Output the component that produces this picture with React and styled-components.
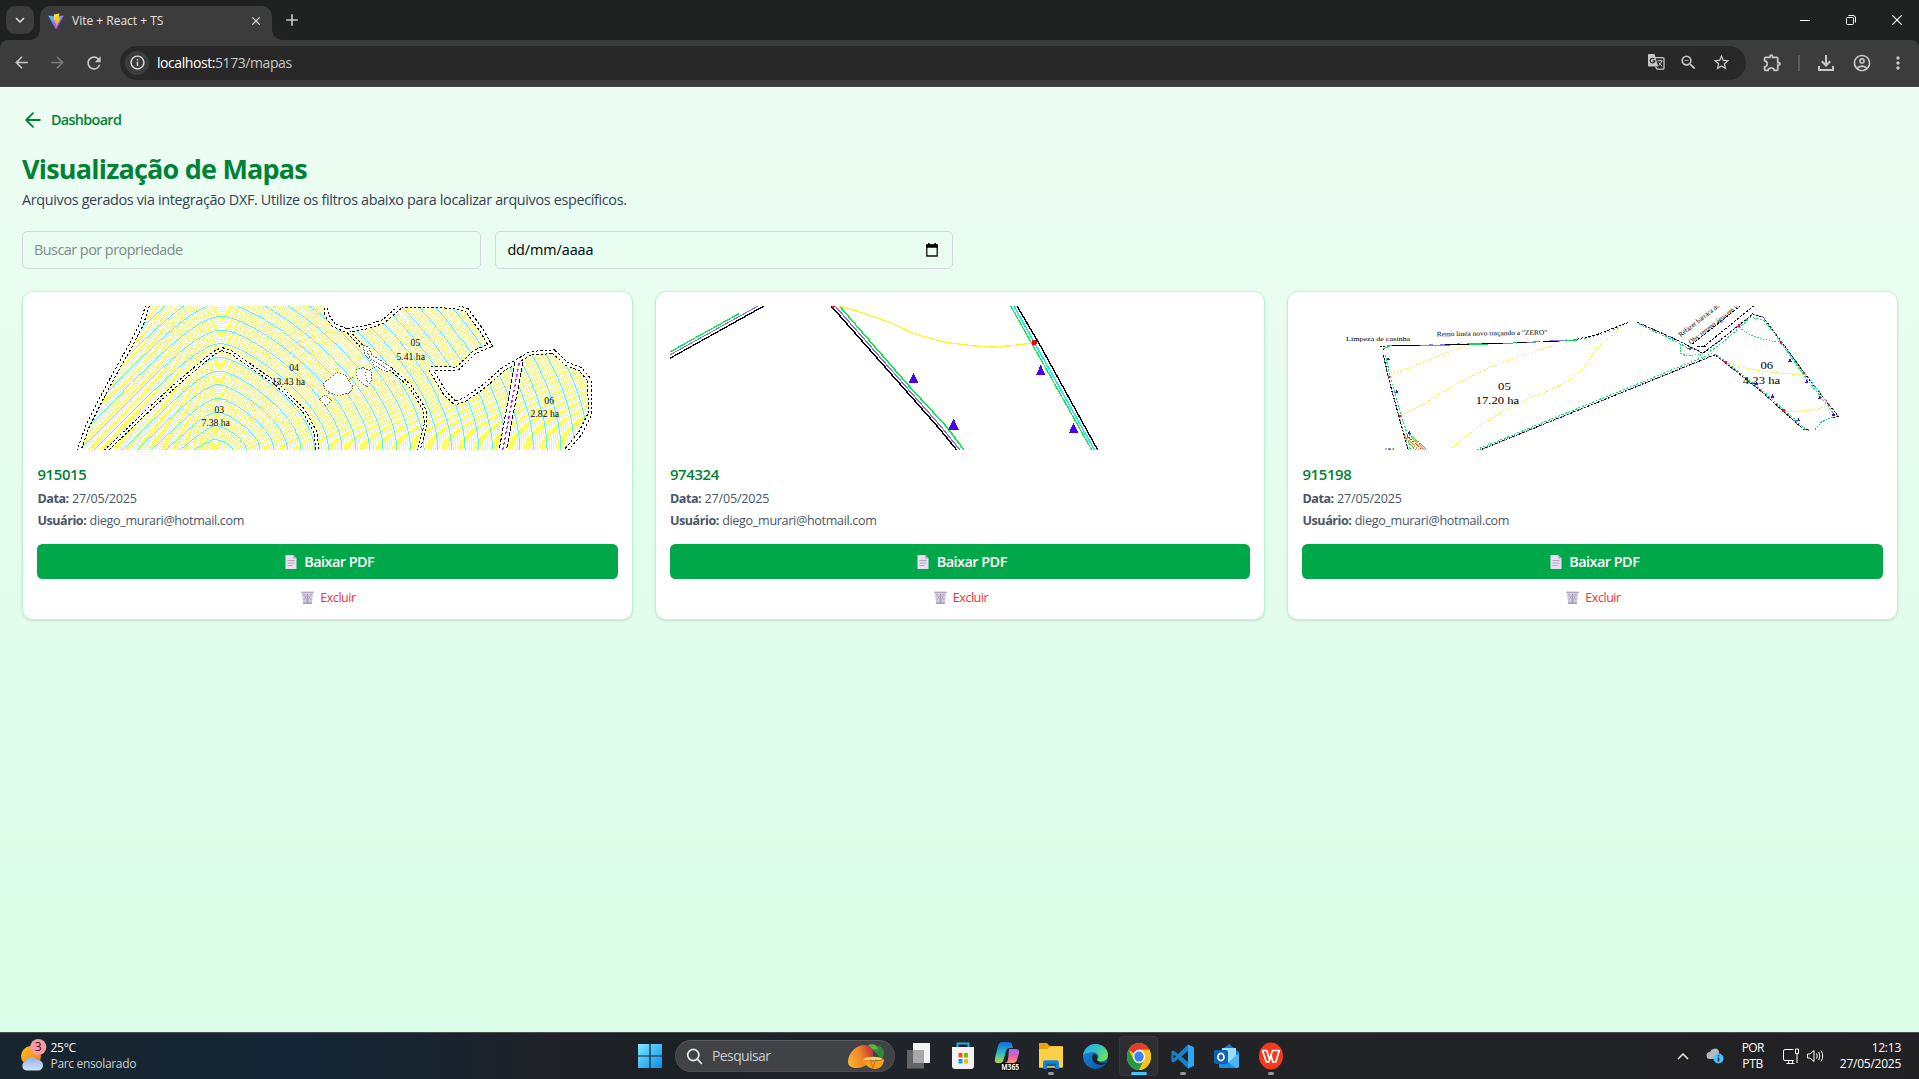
import React from "react";
import styled, { createGlobalStyle, css } from "styled-components";
import {
  MdArrowBack, MdArrowForward, MdRefresh, MdInfoOutline, MdStarOutline, MdZoomOut,
  MdOutlineExtension, MdOutlineAccountCircle, MdMoreVert,
  MdClose, MdAdd, MdKeyboardArrowDown,
} from "react-icons/md";

const Global = createGlobalStyle`
  *, *::before, *::after { box-sizing: border-box; }
  html, body { margin: 0; padding: 0; overflow: hidden; }
  body { font-family: "Open Sans", "Noto Sans", sans-serif; }
  h1, h2, p { margin: 0; }
  button, input { font-family: inherit; }
  svg { display: block; flex: none; }
`;

const Screen = styled.div`
  width: 1919px;
  height: 1079px;
  display: flex;
  flex-direction: column;
  overflow: hidden;
`;

/* ---------- browser ---------- */

const TabStrip = styled.div`
  height: 40px;
  flex: none;
  display: flex;
  align-items: flex-start;
  justify-content: space-between;
  background: #202221;
  padding: 6px 0 0 6px;
`;

const TabGroup = styled.div`
  display: flex;
  align-items: flex-start;
`;

const TabSearch = styled.div`
  width: 28px;
  height: 28px;
  border-radius: 9px;
  background: #3c3c3c;
  color: #e3e3e3;
  display: grid;
  place-items: center;
`;

const Tab = styled.div`
  position: relative;
  width: 232px;
  height: 34px;
  margin-left: 6px;
  padding: 0 9px 4px 8px;
  border-radius: 10px 10px 0 0;
  background: #3c3c3c;
  color: #e3e3e3;
  display: flex;
  align-items: center;

  &::before, &::after {
    content: "";
    position: absolute;
    bottom: 0;
    width: 10px;
    height: 10px;
  }
  &::before {
    left: -10px;
    background: radial-gradient(circle at 0 0, transparent 9.5px, #3c3c3c 10px);
  }
  &::after {
    right: -10px;
    background: radial-gradient(circle at 100% 0, transparent 9.5px, #3c3c3c 10px);
  }
`;

const TabTitle = styled.span`
  flex: 1;
  margin-left: 8px;
  font-size: 12px;
  line-height: 16px;
`;

const NewTab = styled.div`
  margin: 4px 0 0 10px;
  color: #c7c7c7;
`;

const WindowControls = styled.div`
  display: flex;
  margin: -6px -1px 0 0;
`;

const WindowControl = styled.div`
  width: 46px;
  height: 40px;
  display: grid;
  place-items: center;
`;

const Toolbar = styled.div`
  height: 47px;
  flex: none;
  display: flex;
  align-items: center;
  padding: 0 11px 1px 12px;
  background: #3c3c3c;
  border-bottom: 1px solid #4a4a4a;
  border-radius: 8px 8px 0 0;
`;

const ToolbarBack = styled.div`
  flex: none;
  background: #202221;
`;

const NavIcon = styled.div`
  width: 36px;
  color: ${(p) => (p.$dim ? "#7c7c7c" : "#c7c7c7")};
`;

const Omnibox = styled.div`
  flex: 1;
  height: 34px;
  border-radius: 17px;
  background: #282828;
  display: flex;
  align-items: center;
  padding: 0 15px 0 5px;
  color: #c7c7c7;
`;

const SiteInfo = styled.div`
  width: 24px;
  height: 24px;
  border-radius: 50%;
  background: #3c3c3c;
  color: #e3e3e3;
  display: grid;
  place-items: center;
`;

const Url = styled.span`
  flex: 1;
  margin-left: 8px;
  font-size: 14px;
  line-height: 20px;
  letter-spacing: -0.43px;
  color: #c7c7c7;
`;

const Host = styled.span`
  color: #fff;
`;

const OmniActions = styled.div`
  display: flex;
  gap: 14px;
`;

const ToolbarActions = styled.div`
  display: flex;
  align-items: center;
  color: #c7c7c7;
  margin-left: 16px;
`;

const Divider = styled.div`
  width: 2px;
  height: 16px;
  background: #5c5c5c;
  margin: 0 18px 0 15px;
`;

const ToolSlot = styled.div`
  margin-left: ${(p) => p.$gap}px;
`;

/* ---------- page ---------- */

const Page = styled.main`
  flex: 1;
  min-height: 0;
  padding: 21.6px 21px 21.6px 22px;
  background: linear-gradient(180deg, #eefdf4, #d9fde7);
  display: flex;
  flex-direction: column;
`;

const BackLink = styled.a`
  display: flex;
  align-items: center;
  align-self: flex-start;
  gap: 7px;
  height: 22px;
  color: #008236;
  font-size: 14.4px;
  font-weight: 600;
  letter-spacing: -0.68px;
`;

const Title = styled.h1`
  margin-top: 22px;
  font-size: 27px;
  line-height: 32.4px;
  font-weight: 700;
  letter-spacing: -0.8px;
  color: #008236;
  white-space: nowrap;
`;

const Subtitle = styled.p`
  margin-top: 3.6px;
  font-size: 14.4px;
  line-height: 21.6px;
  letter-spacing: -0.34px;
  color: #364153;
`;

const Filters = styled.div`
  display: flex;
  gap: 14.4px;
  margin-top: 20.4px;
`;

const field = css`
  width: 458.5px;
  height: 38px;
  border: 1px solid #d1d5dc;
  border-radius: 5.4px;
  padding: 0 11px;
  font-size: 14.4px;
  background: transparent;
`;

const SearchField = styled.input`
  ${field}
  letter-spacing: -0.52px;
  outline: none;
  &::placeholder { color: #7e8b86; opacity: 1; }
`;

const DateField = styled.div`
  ${field}
  display: flex;
  align-items: center;
  justify-content: space-between;
  padding: 0 14px 0 11.5px;
  color: #000;
`;

const DateText = styled.span`
  letter-spacing: -0.08px;
`;

const Cards = styled.div`
  display: grid;
  grid-template-columns: repeat(3, 1fr);
  gap: 21.6px;
  margin-top: 22px;
`;

const Card = styled.article`
  height: 329.5px;
  padding: 14.4px 14.4px 8px;
  background: #fff;
  border: 1px solid #b9f8cf;
  border-radius: 10.8px;
  box-shadow: 0 1px 3px rgba(0, 0, 0, 0.1), 0 1px 2px -1px rgba(0, 0, 0, 0.1);
  display: flex;
  flex-direction: column;
`;

const Preview = styled.svg`
  width: 100%;
  height: 144px;
  overflow: hidden;
  font-family: "Liberation Serif", serif;
`;

const CardName = styled.h2`
  margin-top: 12px;
  font-size: 14.9px;
  line-height: 25.2px;
  font-weight: 600;
  letter-spacing: -0.35px;
  color: #008236;
`;

const Meta = styled.p`
  margin-top: 3.3px;
  font-size: 12.6px;
  line-height: 18px;
  color: #4a5565;
`;

const MetaKey = styled.strong`
  letter-spacing: -0.46px;
`;

const MetaValue = styled.span`
  letter-spacing: ${(p) => p.$ls || -0.2}px;
`;

const DownloadButton = styled.button`
  margin-top: 14.4px;
  height: 35px;
  border: 0;
  border-radius: 5.4px;
  background: #00a849;
  color: #fff;
  font-size: 14.4px;
  font-weight: 600;
  padding: 0 0 0 4px;
  display: flex;
  align-items: center;
  justify-content: center;
  gap: 7.5px;
`;

const DeleteButton = styled.button`
  margin-top: 8.2px;
  height: 20px;
  border: 0;
  background: none;
  color: #fb2c36;
  font-size: 12.6px;
  padding: 0 0 0 2px;
  display: flex;
  align-items: center;
  justify-content: center;
  gap: 6px;
`;

const ButtonText = styled.span`
  letter-spacing: ${(p) => p.$ls || 0}px;
`;

/* ---------- taskbar ---------- */

const Taskbar = styled.footer`
  height: 47px;
  flex: none;
  display: grid;
  grid-template-columns: 638px 1fr 262px;
  align-items: center;
  border-top: 1px solid #46504f;
  background: linear-gradient(90deg, #18252e 0, #162636 300px, #18232d 440px, #202126 560px, #1c2127 660px, #20242a 900px, #222326 1300px, #212123 100%);
  color: #fff;
  font-size: 12px;
  line-height: 16px;
`;

const Weather = styled.div`
  display: flex;
  align-items: center;
  padding-left: 20px;
  gap: 3.5px;
`;

const WeatherText = styled.div`
  display: flex;
  flex-direction: column;
`;

const Muted = styled.span`
  color: #c9cdd0;
  letter-spacing: -0.33px;
`;

const Tight = styled.span`
  letter-spacing: ${(p) => p.$ls || -0.25}px;
`;

const Apps = styled.div`
  display: flex;
  align-items: center;
`;

const SearchBox = styled.div`
  width: 220px;
  height: 32px;
  margin: 0 2px 0 13px;
  border-radius: 16px;
  background: #404246;
  border: 1px solid #4c4e52;
  border-top-color: #5a5c60;
  display: flex;
  align-items: center;
  padding: 0 9px 0 10px;
  color: #c9c9cb;
`;

const SearchText = styled.span`
  flex: 1;
  margin-left: 9px;
  font-size: 14px;
  letter-spacing: -0.6px;
`;

const AppSlot = styled.div`
  position: relative;
  width: 44px;
  height: 40px;
  display: grid;
  place-items: center;
`;

const ActivePlate = styled.div`
  position: absolute;
  left: 2px;
  top: 0;
  width: 39px;
  height: 40px;
  border-radius: 4px;
  background: #2c2e32;
  border: 1px solid #37393d;
`;

const RunDot = styled.div`
  position: absolute;
  bottom: 1px;
  left: 50%;
  width: ${(p) => (p.$active ? 16 : 6)}px;
  height: 3px;
  margin-left: ${(p) => (p.$active ? -8 : -3)}px;
  border-radius: 2px;
  background: ${(p) => (p.$active ? "#4cc2ff" : "#9a9a9c")};
`;

const AppIcon = styled.svg`
  position: relative;
`;

const Tray = styled.div`
  display: flex;
  align-items: center;
  justify-content: flex-end;
  padding-right: 18px;
`;

const TrayIcons = styled.div`
  display: flex;
  align-items: center;
  gap: ${(p) => p.$gap}px;
`;

const Stack = styled.div`
  display: flex;
  flex-direction: column;
  align-items: ${(p) => p.$align || "center"};
  margin: ${(p) => p.$margin || 0};
`;

/* ---------- map drawings ---------- */

const REGION =
  "M236,-10 L232,18 L215,72 L180,140 L132,225 L92,300 L52,380 L24,460 L1480,460 L1530,400 L1560,340 L1558,240 L1530,207 L1490,192 L1450,155 L1380,160 L1335,187 L1300,207 L1240,260 L1185,298 L1155,309 L1125,280 L1080,205 L1110,205 L1160,207 L1215,155 L1260,136 L1235,92 L1190,30 L1160,22 L1100,16 L995,16 L940,64 L895,80 L830,92 L790,75 L770,45 L763,-10 Z";

function contour(n) {
  const apex = 418 - 41 * n;
  const h = 450 - apex;
  const left = 372 - 43 * n;
  const right = 488 + 41 * n;
  const tip = 435 + Math.min(n, 8) * 2.5;
  const wl = tip - left;
  const wr = right - tip;
  return `M${left},460 L${left},450 C${left + wl * 0.45},${450 - h * 0.52} ${tip - wl * 0.2},${apex} ${tip},${apex} C${tip + wr * 0.22},${apex} ${right},${450 - h * 0.45} ${right},450 L${right},460`;
}

function Road({ d, w = 15 }) {
  return (
    <g fill="none">
      <path d={d} stroke="#000" strokeWidth={w} strokeDasharray="7 6" />
      <path d={d} stroke="#fff" strokeWidth={w - 6} />
    </g>
  );
}

function ContourMap() {
  const yellow = [];
  const cyan = [];
  for (let i = -4; i < 180; i += 1) {
    if (i % 6 === 0) cyan.push(contour(i / 6));
    else yellow.push(contour(i / 6));
  }
  return (
    <Preview viewBox="-99 18 1740 432" preserveAspectRatio="none" shapeRendering="crispEdges">
      <clipPath id="region"><path d={REGION} /></clipPath>
      <g clipPath="url(#region)" fill="none">
        <path d={REGION} fill="#fff" />
        <path d={yellow.join(" ")} stroke="#fbf93a" strokeWidth="2.6" />
        <path d={cyan.join(" ")} stroke="#19f5f0" strokeWidth="2.4" />
      </g>
      <Road d={REGION} w={14} />
      <Road d="M105,455 L240,325 L340,235 L430,160 L455,147 L480,155 L620,252 L700,330 L738,400 L741,455" w={12} />
      <Road d="M835,95 L880,145" w={12} />
      <Road d="M960,205 L1020,258 L1064,330 L1067,372 L1045,455" w={11} />
      <g fill="#fff" stroke="#444" strokeWidth="2.6" strokeDasharray="5 4">
        <path d="M880,136 L895,141 L905,165 L940,186 L968,208 L950,216 L915,197 L884,165 Z" />
        <path d="M890,152 L900,175 L950,206" />
        <path d="M800,218 L825,225 L850,262 L840,278 L800,287 L765,270 L760,250 Z" />
        <path d="M880,203 L905,215 L905,240 L892,262 L860,235 L858,210 Z" />
        <path d="M885,215 L892,250" />
        <path d="M762,285 L785,300 L768,318 L748,300 Z" />
        <path d="M838,238 L856,228 M898,212 L915,200 M768,288 L780,275" />
      </g>
      <path d="M1347,185 L1297,455" stroke="#fff" strokeWidth="24" />
      <path d="M1335,185 L1286,455 M1359,185 L1308,455" stroke="#000" strokeWidth="3" strokeDasharray="12 6" />
      <path d="M1347,190 L1297,455" stroke="#f0f" strokeWidth="3.6" strokeDasharray="9 7" />
      <g fontSize="29" textAnchor="middle" fill="#000">
        <text x="448" y="338">03</text><text x="437" y="379">7.38 ha</text>
        <text x="672" y="214">04</text><text x="655" y="255">13.43 ha</text>
        <text x="1036" y="138">05</text><text x="1022" y="179">5.41 ha</text>
        <text x="1437" y="312">06</text><text x="1424" y="352">2.82 ha</text>
      </g>
    </Preview>
  );
}

function Line({ d, color, w = 1.1 }) {
  return <path d={d} fill="none" stroke={color} strokeWidth={w} vectorEffect="non-scaling-stroke" />;
}

function RoadsMap() {
  return (
    <Preview viewBox="49.5 63 1467 432" preserveAspectRatio="none" shapeRendering="crispEdges">
      <Line d="M46,203 L225,85" color="#00f03c" w={1.3} />
      <Line d="M46,212 L272,63" color="#8a78f0" />
      <Line d="M46,222 L287,63" color="#000" w={1.3} />
      <Line d="M457,63 L730,430 L776,497" color="#000" w={1.5} />
      <Line d="M467,63 L735,425 L784,497" color="#8a70ee" w={1.3} />
      <Line d="M478,63 L650,298 L748,424 L794,497" color="#00f03c" w={1.5} />
      <Line d="M478,63 L540,85 L605,112 L665,145 L745,172 L820,183 L865,186 L915,182 L968,174" color="#fbf62e" w={1.3} />
      <Line d="M911,63 L995,240 L1117,497" color="#00f03c" w={1.2} />
      <Line d="M919,63 L1124,497" color="#10f0f0" w={1.5} />
      <Line d="M927,63 L985,180 L1132,497" color="#000" w={1.4} />
      <ellipse cx="462" cy="65" rx="4" ry="4" fill="#f01020" />
      <ellipse cx="971" cy="172.5" rx="7" ry="8" fill="#ff0018" />
      <g fill="#4b00f5">
        <path d="M665,264 L678,294 H652 Z" />
        <path d="M767,401 L780,435 H753 Z" />
        <path d="M987,239 L999,270 H975 Z" />
        <path d="M1070,413 L1082,444 H1058 Z" />
      </g>
    </Preview>
  );
}

function Border({ d, inner }) {
  return (
    <g fill="none" strokeWidth="3.4">
      <path d={d} stroke="#000" strokeDasharray="6 5" />
      <path d={d} stroke="#7a5cf0" strokeDasharray="4 7" strokeDashoffset="-5" />
      <path d={inner} stroke="#00f060" strokeDasharray="6 5" />
    </g>
  );
}

const MARKERS = [[174, 177], [200, 275], [238, 399], [1380, 181], [1430, 245], [1469, 293], [1510, 344], [1280, 251], [1327, 289], [1405, 360]];
const JOINTS = [[177, 231], [210, 348], [1227, 77], [1353, 128], [1422, 220], [1497, 315], [1186, 187], [1360, 332]];

function ParcelMap() {
  return (
    <Preview viewBox="-84 18 1740 432" preserveAspectRatio="none" shapeRendering="crispEdges">
      <Border d="M160,165 L178,245 L236,455" inner="M166,165 L184,245 L232,405 L242,455" />
      <Border d="M922,67 L1045,122 L1118,160 L1165,125 L1268,42 L1300,52 L1335,100 L1425,222 L1525,350 L1510,352" inner="M926,72 L1045,128 L1075,145 M1140,154 L1180,125 L1262,52 L1300,60 L1335,104 L1420,224 L1514,345" />
      <Border d="M445,452 L1155,164 L1190,192 L1300,280 L1420,388 L1436,390" inner="M440,449 L1145,161 M1160,164 L1196,192 L1306,280 L1425,386" />
      <g fill="none" strokeWidth="3">
        <path d="M160,146 L180,138 L400,135 L740,121" stroke="#00e050" strokeDasharray="70 60" strokeDashoffset="-130" />
        <path d="M170,138 L270,136 L410,131 L560,129 L740,118" stroke="#8a78f0" strokeDasharray="60 20" />
        <path d="M185,136 L270,136 M345,134 L420,132 M455,131 L520,130 M560,129 L590,128 M640,125 L685,123" stroke="#000" />
        <path d="M740,118 L800,104 L895,67" stroke="#000" strokeDasharray="8 4" />
        <path d="M750,119 L805,106 L870,81" stroke="#00e050" strokeDasharray="4 9" />
        <path d="M150,138 L162,140 L160,152" stroke="#000" strokeDasharray="5 4" />
      </g>
      <g fill="none" stroke="#f8f43c" strokeWidth="3" strokeDasharray="5 4">
        <path d="M183,222 C260,200 330,160 405,140" />
        <path d="M215,345 C340,290 400,210 680,134" />
        <path d="M365,445 C440,380 530,320 620,285 C780,230 770,170 805,140 L888,72" />
        <path d="M1188,188 Q1300,222 1415,223 M1365,334 Q1450,335 1495,317" />
      </g>
      <g fill="none" stroke="#10e868" strokeWidth="3" strokeDasharray="5 4">
        <path d="M1228,80 Q1260,118 1352,126" />
        <path d="M1052,132 V160 L1070,168 L1110,162 L1117,178" />
        <path d="M1454,389 L1475,365 L1512,350" stroke="#00c8c0" />
        <path d="M1370,150 L1420,220 M1440,240 L1495,312" stroke="#00f0e8" />
      </g>
      <g fill="none" strokeWidth="3" strokeDasharray="5 3">
        <path d="M230,406 L278,452" stroke="#f01818" />
        <path d="M224,408 L268,452 M236,404 L284,450" stroke="#ff9020" />
        <path d="M238,402 L292,450 M228,418 L258,452" stroke="#10e050" />
        <path d="M1085,133 L1235,14 M1118,142 L1275,14 M1102,140 H1128" stroke="#000" strokeDasharray="8 4" />
      </g>
      <path d="M1066,142 L1088,146 L1080,150 Z" fill="#208040" />
      {MARKERS.map(([x, y]) => <path key={x} d={`M${x},${y - 6} l6,10 h-12 Z`} fill="#4b00f5" />)}
      {JOINTS.map(([x, y]) => <rect key={x} x={x - 4} y={y - 4} width="8" height="7" fill="#ff1020" />)}
      <g fill="#000" textAnchor="middle" fontSize="30" lengthAdjust="spacingAndGlyphs">
        <text x="523" y="269" textLength="38" lengthAdjust="spacingAndGlyphs">05</text>
        <text x="502" y="312" textLength="130" lengthAdjust="spacingAndGlyphs">17.20 ha</text>
        <text x="1310" y="207" textLength="38" lengthAdjust="spacingAndGlyphs">06</text>
        <text x="1294" y="251" textLength="112" lengthAdjust="spacingAndGlyphs">4.23 ha</text>
      </g>
      <g fill="#000" fontSize="20">
        <text x="48" y="123" textLength="192" lengthAdjust="spacingAndGlyphs">Limpeza de casinha</text>
        <text x="320" y="109" textLength="332" lengthAdjust="spacingAndGlyphs" transform="rotate(-1 320 108)">Remo linea novo traçando a "ZERO"</text>
        <text x="163" y="455">184</text>
        <text transform="translate(1052 112) rotate(-38)" fontSize="22" textLength="150" lengthAdjust="spacingAndGlyphs">Refazer barraca do</text>
        <text transform="translate(1083 134) rotate(-38)" fontSize="22" textLength="184" lengthAdjust="spacingAndGlyphs">Obs: terreno água em v.</text>
      </g>
    </Preview>
  );
}

/* ---------- small icons ---------- */

function ViteIcon() {
  return (
    <svg width="16" height="17" viewBox="0 0 32 32" preserveAspectRatio="none">
      <defs>
        <linearGradient id="va" x1="0" y1="0" x2="0.6" y2="1"><stop offset="0" stopColor="#41d1ff" /><stop offset="1" stopColor="#bd34fe" /></linearGradient>
        <linearGradient id="vb" x1="0.4" y1="0" x2="0.6" y2="1"><stop offset="0" stopColor="#ffea83" /><stop offset="0.1" stopColor="#ffdd35" /><stop offset="1" stopColor="#ffa800" /></linearGradient>
      </defs>
      <path fill="url(#va)" d="M31 5.8 16.8 30.4a.8.8 0 0 1-1.4 0L1 5.8a.8.8 0 0 1 .8-1.2L16 7.1l14.2-2.5a.8.8 0 0 1 .8 1.2Z" />
      <path fill="url(#vb)" d="m22.5 1-10.3 2a.4.4 0 0 0-.3.4l-.7 10.700a.4.4 0 0 0 .5.4l2.900-.7c.3 0 .5.2.5.5l-.9 4.200c0 .3.2.5.5.4l1.800-.5c.3 0 .5.2.4.5l-1.300 6.500c-.1.4.4.6.7.3L25 9.400c.2-.3 0-.6-.4-.6l-3 .6a.4.4 0 0 1-.5-.5L23 1.500a.4.4 0 0 0-.5-.5Z" />
    </svg>
  );
}

function TranslateIcon() {
  return (
    <svg width="18" height="18" viewBox="0 0 18 18" fill="none">
      <path d="M7.500 4.700H16q1 0 1 1V15q0 1.200-1.200 1.200H10L8.500 13.500" stroke="#c7c7c7" strokeWidth="1.300" />
      <path d="M2 1h5.500l3.700 12.500H2q-1 0-1-1V2q0-1 1-1Z" fill="#c7c7c7" />
      <path d="M7.300 6.100A2.300 2.300 0 1 0 7.800 7.900H5.800" stroke="#282828" strokeWidth="1.200" />
      <path d="M10.500 7.800h5.200M13 6.800v1M14.800 8q-.8 3-3.300 4.800M11.800 9.500q1 2 3.400 3.700" stroke="#c7c7c7" strokeWidth="1" />
    </svg>
  );
}

function DownloadIcon() {
  return (
    <svg width="16" height="16" viewBox="0 0 16 16" fill="none" stroke="currentColor" strokeWidth="2">
      <path d="M8 0v10M3.800 6.300 8 10.500l4.200-4.200M1 11v4h14v-4" />
    </svg>
  );
}

function DocIcon() {
  return (
    <svg width="12" height="14" viewBox="0 0 12 14">
      <path d="M.5 0H8l3.500 3.500V14H.5Z" fill="#e9dff2" />
      <path d="M8 0l3.500 3.500H8Z" fill="#b9a8cc" />
      <path d="M2.500 5.500h7M2.500 8h7M2.500 10.500h5" stroke="#b3a4c2" strokeWidth="1" />
    </svg>
  );
}

function TrashIcon() {
  return (
    <svg width="13" height="13" viewBox="0 0 13 13">
      <path d="M.8 1.500h11.400L10.900 12.500H2.100Z" fill="#d3cadd" />
      <path d="M2.500 3l5 8M10.500 3l-5 8M6.500 3v8.500M6 3l4.300 6M7 3 2.700 9" stroke="#a597b6" strokeWidth="0.700" />
      <path d="M.2.600h12.600v1.400H.2Z" fill="#b4a8c2" />
      <path d="M2.100 11.400h8.800V13H2.100Z" fill="#a89cb8" />
    </svg>
  );
}

function CalendarIcon() {
  return (
    <svg width="12" height="14" viewBox="0 0 12 14">
      <path d="M.8 2h10.400v11H.8Z" fill="none" stroke="#111" strokeWidth="1.300" />
      <path d="M.3 1.500h11.400v3.200H.3ZM2 0h1.600v2H2ZM8.400 0H10v2H8.400Z" fill="#000" />
    </svg>
  );
}

function WeatherIcon() {
  return (
    <svg width="27" height="38" viewBox="0 0 27 38">
      <defs><linearGradient id="sun" x1="0" y1="0" x2="1" y2="1"><stop offset="0" stopColor="#fbc02d" /><stop offset="1" stopColor="#f0780f" /></linearGradient>
        <linearGradient id="cl" x1="0" y1="0" x2="0" y2="1"><stop offset="0" stopColor="#8fb4ee" /><stop offset="1" stopColor="#cfe2fb" /></linearGradient></defs>
      <circle cx="11" cy="19" r="10" fill="url(#sun)" />
      <path d="M6.500 33.500a4.500 4.500 0 0 1-.5-8.900 6 6 0 0 1 11-1.600 5.300 5.300 0 0 1 1.500 10.500Z" fill="url(#cl)" />
      <circle cx="18.300" cy="10" r="8" fill="#ff99a4" />
      <text x="18.300" y="14.300" fontSize="12" textAnchor="middle" fill="#2a1014">3</text>
    </svg>
  );
}

function WindowsIcon() {
  return (
    <AppIcon width="24" height="24" viewBox="0 0 24 24">
      <defs><linearGradient id="win" x1="0" y1="0" x2="1" y2="1"><stop offset="0" stopColor="#7de9ff" /><stop offset="1" stopColor="#0a8cf0" /></linearGradient></defs>
      <path d="M0 0h11.400v11.400H0ZM12.600 0H24v11.400H12.600ZM0 12.600h11.400V24H0ZM12.600 12.600H24V24H12.600Z" fill="url(#win)" />
    </AppIcon>
  );
}

function SearchIcon() {
  return (
    <svg width="17" height="17" viewBox="0 0 17 17" fill="none" stroke="#e8e8ea" strokeWidth="1.700" strokeLinecap="round">
      <circle cx="7.300" cy="7" r="5.600" /><path d="m11.400 11.200 4 4.300" />
    </svg>
  );
}

function MangoIcon() {
  return (
    <svg width="38" height="28" viewBox="0 0 38 28">
      <defs><linearGradient id="mg" x1="0" y1="0.600" x2="1" y2="0.300"><stop offset="0" stopColor="#f9b233" /><stop offset="0.500" stopColor="#f08428" /><stop offset="1" stopColor="#c22e3c" /></linearGradient></defs>
      <path d="M25 8C28 2 34 3 36 7c2 4 1 8-2 11-2-5-6-8-9-10Z" fill="#2f8a35" />
      <path d="M21 3c5-2 9 0 10 4-4 2-8 0-10-4Z" fill="#5db544" />
      <path d="M1 20C1 11 9 3 17 3c6 0 10 4 9 10-1 8-9 13-16 13-5 0-9-2-9-6Z" fill="url(#mg)" />
      <path d="M15 17c4 3 17 3 22 0 0 6-4 10-9 10s-11-4-13-10Z" fill="#f6a11e" />
      <path d="M16 17c5-3 15-3 20 0-5 2-15 2-20 0Z" fill="#fdd45c" />
      <path d="m23 17 3 9 3-9" stroke="#d96f10" fill="none" />
    </svg>
  );
}

function TaskViewIcon() {
  return (
    <AppIcon width="26" height="28" viewBox="0 0 26 28">
      <path d="M7 1h17v20H7Z" fill="#f3f3f3" />
      <path d="M1 8h17v18.500H1Z" fill="#646466" />
      <path d="M7 8h11v13H7Z" fill="#a9a9ab" />
    </AppIcon>
  );
}

function StoreIcon() {
  return (
    <AppIcon width="24" height="28" viewBox="0 0 24 28">
      <path d="M6.500 7V1.500h11V7" fill="none" stroke="#2aa8e8" strokeWidth="2" />
      <path d="M1 5h22v19q0 3-3 3H4q-3 0-3-3Z" fill="#f2f2f2" />
      <path d="M7.500 11h4v4.500h-4Z" fill="#f25022" /><path d="M13 11h4v4.500h-4Z" fill="#7fba00" />
      <path d="M7.500 17h4v4.500h-4Z" fill="#00a4ef" /><path d="M13 17h4v4.500h-4Z" fill="#ffb900" />
    </AppIcon>
  );
}

function CopilotIcon() {
  return (
    <AppIcon width="26" height="30" viewBox="0 0 26 30">
      <defs>
        <linearGradient id="c1" x1="0" y1="0" x2="0" y2="1"><stop offset="0" stopColor="#1466d8" /><stop offset="0.500" stopColor="#28b8c8" /><stop offset="1" stopColor="#b8d840" /></linearGradient>
        <linearGradient id="c2" x1="0" y1="0" x2="0" y2="1"><stop offset="0" stopColor="#9a70f0" /><stop offset="0.500" stopColor="#e860b0" /><stop offset="1" stopColor="#ff9868" /></linearGradient>
      </defs>
      <path d="M8 1h7q2.500 0 3.200 3l.8 3h-4q-2 0-3 3l-2.500 9Q8.500 22 6 22H3.500Q0 22 1 17L4 5Q5 1 8 1Z" fill="url(#c1)" />
      <path d="M15 8h6.500Q26 8 25 12l-2 7q-1 3-3.500 3H11q2 0 3-3Z" fill="url(#c2)" />
      <path d="M6.500 22H26v8H6.500Z" fill="#050505" />
      <text x="16.200" y="28.900" fontSize="8" fontWeight="700" textAnchor="middle" fill="#fff" textLength="18" lengthAdjust="spacingAndGlyphs">M365</text>
    </AppIcon>
  );
}

function ExplorerIcon() {
  return (
    <AppIcon width="24" height="28" viewBox="0 0 24 26" preserveAspectRatio="none">
      <path d="M0 1h8l3 3h12q1 0 1 1v5H0Z" fill="#e8a010" />
      <path d="M0 6.500h8.500L11 4h12q1 0 1 1v18q0 1-1 1H0Z" fill="#fdd048" />
      <path d="M4 25v-5.500Q4 17 6.500 17h11q2.500 0 2.500 2.500V25h-4v-3H8v3Z" fill="#1584d8" />
      <path d="M7 20h10v2.500H7Z" fill="#0c5ca8" />
    </AppIcon>
  );
}

function EdgeIcon() {
  return (
    <AppIcon width="25" height="25" viewBox="0 0 24 24">
      <defs><linearGradient id="e1" x1="0" y1="0" x2="1" y2="0.500"><stop offset="0" stopColor="#2aa6e8" /><stop offset="0.600" stopColor="#35c4c0" /><stop offset="1" stopColor="#6be060" /></linearGradient>
        <linearGradient id="e2" x1="0" y1="0" x2="1" y2="1"><stop offset="0" stopColor="#1b8be0" /><stop offset="1" stopColor="#0c50a0" /></linearGradient></defs>
      <circle cx="12" cy="12" r="12" fill="url(#e2)" />
      <path d="M.2 10.500C1 4.500 6 0 12 0c7 0 12 5 12 10.500 0 4-3 6.200-6.300 6.200-2.500 0-4-1-4-1.800 0-.7 1-1 1-3 0-2.300-2.200-4-5-4-5 0-8.500 2-9.500 2.600Z" fill="url(#e1)" />
      <path d="M9.500 10c-1.500 2.500-.8 9 6.500 10 3 .4 5-.6 6.800-2.200-1 .3-2 .5-3.300.5-4.500 0-7.500-2.300-5.600-5.500.6-1.400-2.600-4.800-4.400-2.800Z" fill="#1d2228" />
    </AppIcon>
  );
}

function ChromeIcon() {
  return (
    <AppIcon width="24" height="27" viewBox="0 0 24 24" preserveAspectRatio="none">
      <circle cx="12" cy="12" r="12" fill="#fbc116" />
      <path d="M12 12 1.600 6A12 12 0 0 1 22.400 6L12 6Z" fill="#e33b2e" />
      <path d="M1.600 6A12 12 0 0 0 12 24l5.200-9L12 12 6.800 15Z" fill="#249a46" />
      <path d="M22.400 6H12l5.200 9L12 24A12 12 0 0 0 22.400 6Z" fill="#fcc31a" />
      <circle cx="12" cy="12" r="6" fill="#fff" /><circle cx="12" cy="12" r="4.700" fill="#3b82f0" />
    </AppIcon>
  );
}

function CodeIcon() {
  return (
    <AppIcon width="24" height="25" viewBox="0 0 24 24">
      <path d="M17 0 7 9.600 2.500 6 .5 7v10l2 1L7 14.400 17 24l.5-6-7-6 7-6Z" fill="#1b80c8" />
      <path d="M2.500 10 5 12l-2.500 2Z" fill="#1c2127" />
      <path d="M17 0l6 2.800v18.400L17 24Z" fill="#2fa8f0" />
    </AppIcon>
  );
}

function OutlookIcon() {
  return (
    <AppIcon width="26" height="26" viewBox="0 0 26 26">
      <path d="M5 9 15 1l10 8v14q0 2-2 2H7q-2 0-2-2Z" fill="#1a78d0" />
      <path d="M8 5h14v10l-7 5-7-5Z" fill="#9adcfa" />
      <path d="M25 10v13q0 2-2 2H8Z" fill="#48b8f4" />
      <path d="M5 12 22 25H7q-2 0-2-2Z" fill="#1c90e0" />
      <rect x="0" y="7" width="14" height="14" rx="2" fill="#0f62b8" />
      <ellipse cx="7" cy="14" rx="3" ry="3.600" fill="none" stroke="#fff" strokeWidth="1.700" />
    </AppIcon>
  );
}

function WpsIcon() {
  return (
    <AppIcon width="24" height="28" viewBox="0 0 24 28">
      <ellipse cx="12" cy="14" rx="12" ry="13.500" fill="#f5391c" />
      <path d="M3.500 8.500h4.300l2.700 9 3-9h6.800L16.800 20h-3L12 13.500 9.800 20H7.300Z" fill="none" stroke="#fff" strokeWidth="1.700" strokeLinejoin="round" />
    </AppIcon>
  );
}

const APPS = [
  { icon: TaskViewIcon }, { icon: StoreIcon }, { icon: CopilotIcon },
  { icon: ExplorerIcon, running: true }, { icon: EdgeIcon },
  { icon: ChromeIcon, running: true, active: true }, { icon: CodeIcon, running: true },
  { icon: OutlookIcon }, { icon: WpsIcon, running: true },
];

const FILES = [
  { name: "915015", map: ContourMap },
  { name: "974324", map: RoadsMap },
  { name: "915198", map: ParcelMap },
];

function MapCard({ name, map: Map }) {
  return (
    <Card>
      <Map />
      <CardName>{name}</CardName>
      <Meta><MetaKey>Data:</MetaKey> <MetaValue>27/05/2025</MetaValue></Meta>
      <Meta><MetaKey>Usuário:</MetaKey> <MetaValue $ls={-0.33}>diego_murari@hotmail.com</MetaValue></Meta>
      <DownloadButton><DocIcon /><ButtonText $ls={-0.5}>Baixar PDF</ButtonText></DownloadButton>
      <DeleteButton><TrashIcon /><ButtonText $ls={-0.5}>Excluir</ButtonText></DeleteButton>
    </Card>
  );
}

export default function App() {
  return (
    <Screen>
      <Global />
      <TabStrip>
        <TabGroup>
          <TabSearch><MdKeyboardArrowDown size={18} /></TabSearch>
          <Tab><ViteIcon /><TabTitle>Vite + React + TS</TabTitle><MdClose size={14} /></Tab>
          <NewTab><MdAdd size={20} /></NewTab>
        </TabGroup>
        <WindowControls>
          <WindowControl><svg width="10" height="10"><path d="M0 5h10" stroke="#fff" shapeRendering="crispEdges" /></svg></WindowControl>
          <WindowControl><svg width="10" height="10" fill="none" stroke="#fff"><rect x=".5" y="2.500" width="7" height="7" rx="1" /><path d="M2.500.500H7q2.500 0 2.500 2.500v4.500" /></svg></WindowControl>
          <WindowControl><svg width="10" height="10" stroke="#fff" strokeWidth="1.100"><path d="M0 0l10 10M10 0 0 10" /></svg></WindowControl>
        </WindowControls>
      </TabStrip>
      <ToolbarBack>
        <Toolbar>
          <NavIcon><MdArrowBack size={19} /></NavIcon>
          <NavIcon $dim><MdArrowForward size={19} /></NavIcon>
          <NavIcon><MdRefresh size={20} /></NavIcon>
          <Omnibox>
            <SiteInfo><MdInfoOutline size={17} /></SiteInfo>
            <Url><Host>localhost:</Host>5173/mapas</Url>
            <OmniActions><TranslateIcon /><MdZoomOut size={19} /><MdStarOutline size={19} /></OmniActions>
          </Omnibox>
          <ToolbarActions>
            <MdOutlineExtension size={21} />
            <Divider />
            <DownloadIcon />
            <ToolSlot $gap={18}><MdOutlineAccountCircle size={20} /></ToolSlot>
            <ToolSlot $gap={16}><MdMoreVert size={20} /></ToolSlot>
          </ToolbarActions>
        </Toolbar>
      </ToolbarBack>
      <Page>
        <BackLink>
          <svg width="22" height="22" viewBox="0 0 24 24" fill="none" stroke="currentColor" strokeWidth="2" strokeLinecap="round" strokeLinejoin="round"><path d="M19.500 12h-15M12 4.500 4.500 12l7.500 7.500" /></svg>
          <span>Dashboard</span>
        </BackLink>
        <Title>Visualização de Mapas</Title>
        <Subtitle>Arquivos gerados via integração DXF. Utilize os filtros abaixo para localizar arquivos específicos.</Subtitle>
        <Filters>
          <SearchField placeholder="Buscar por propriedade" />
          <DateField><DateText>dd/mm/aaaa</DateText><CalendarIcon /></DateField>
        </Filters>
        <Cards>{FILES.map((f) => <MapCard key={f.name} {...f} />)}</Cards>
      </Page>
      <Taskbar>
        <Weather>
          <WeatherIcon />
          <WeatherText><Tight>25°C</Tight><Muted>Parc ensolarado</Muted></WeatherText>
        </Weather>
        <Apps>
          <WindowsIcon />
          <SearchBox><SearchIcon /><SearchText>Pesquisar</SearchText><MangoIcon /></SearchBox>
          {APPS.map(({ icon: Icon, running, active }, i) => (
            <AppSlot key={i}>{active && <ActivePlate />}<Icon />{running && <RunDot $active={active} />}</AppSlot>
          ))}
        </Apps>
        <Tray>
          <TrayIcons $gap={17}>
            <svg width="12" height="7" viewBox="0 0 12 7" fill="none" stroke="#fff" strokeWidth="1.400"><path d="m1 6 5-5 5 5" /></svg>
            <svg width="18" height="16" viewBox="0 0 18 16"><path d="M4 11a3.500 3.500 0 0 1 0-7 5 5 0 0 1 9-1v8Z" fill="#b8b8ba" /><circle cx="12.500" cy="10.500" r="5" fill="#4cc2ff" /><path d="M12.500 9.500v4M12.500 7v1.300" stroke="#123" strokeWidth="1.400" /></svg>
          </TrayIcons>
          <Stack $margin="0 19px 0 18px"><Tight $ls={-0.6}>POR</Tight><Tight>PTB</Tight></Stack>
          <TrayIcons $gap={7}>
            <svg width="17" height="17" viewBox="0 0 17 17" fill="none" stroke="#fff"><path d="M10.500 1.500H2q-1.500 0-1.500 1.500v8q0 1.500 1.500 1.500h9M3.500 15.500h8M5.500 12.500v3M9.500 12.500v3M12.500 1h3v4.500h-3ZM14 5.500V15" /></svg>
            <svg width="17" height="14" viewBox="0 0 17 14" fill="none" stroke="#fff" strokeLinejoin="round"><path d="M.5 5v4H3l4 3.500v-11L3 5ZM9.500 4.500q1.500 2.500 0 5M11.700 3q2.500 4 0 8M14 1.500q3.500 5.500 0 11" /></svg>
          </TrayIcons>
          <Stack $align="flex-end" $margin="0 0 0 16px"><Tight>12:13</Tight><Tight>27/05/2025</Tight></Stack>
        </Tray>
      </Taskbar>
    </Screen>
  );
}
